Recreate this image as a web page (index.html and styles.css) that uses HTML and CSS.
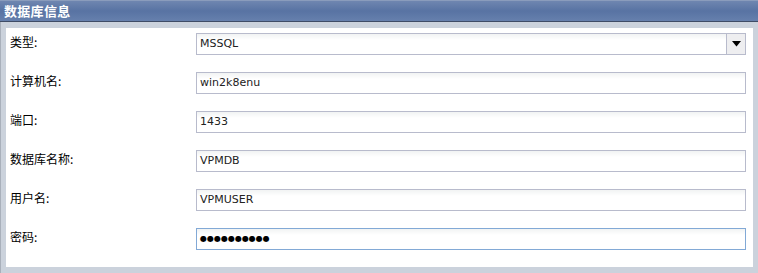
FILE: index.html
```html
<!DOCTYPE html>
<html lang="zh">
<head>
<meta charset="utf-8">
<link rel="stylesheet" href="styles.css">
</head>
<body>
<div class="panel">
  <div class="header">数据库信息</div>
  <div class="frame">
    <div class="content">
      <div class="row">
        <span class="label">类型:</span>
        <div class="select"><span class="val">MSSQL</span><span class="btn"><svg width="9" height="6" viewBox="0 0 9 6"><path d="M0 0H9L4.5 5.5Z" fill="#000"/></svg></span></div>
      </div>
      <div class="row">
        <span class="label">计算机名:</span>
        <div class="field">win2k8enu</div>
      </div>
      <div class="row">
        <span class="label">端口:</span>
        <div class="field">1433</div>
      </div>
      <div class="row">
        <span class="label">数据库名称:</span>
        <div class="field">VPMDB</div>
      </div>
      <div class="row">
        <span class="label">用户名:</span>
        <div class="field">VPMUSER</div>
      </div>
      <div class="row">
        <span class="label">密码:</span>
        <div class="field focus"><span class="dots">●●●●●●●●●●</span></div>
      </div>
    </div>
  </div>
</div>
</body>
</html>
```
FILE: styles.css
```css
html, body {
  margin: 0;
  padding: 0;
  background: #cdd4dd;
}
.panel {
  width: 758px;
  height: 273px;
  display: flex;
  flex-direction: column;
  font-family: "Noto Sans CJK SC", "DejaVu Sans", sans-serif;
}
.header {
  height: 22px;
  box-sizing: border-box;
  border-top: 1px solid #8a9cbc;
  border-bottom: 1px solid #3f4c66;
  background: linear-gradient(#6f86b0, #5873a3 50%, #6680ad);
  color: #fff;
  font-weight: bold;
  font-size: 13px;
  line-height: 20px;
  padding-left: 4px;
  letter-spacing: 0.3px;
}
.frame {
  flex: 1;
  background: #cbd2dc;
  border-left: 1px solid #a9b0bb;
  padding: 6px 5px 6px 5px;
  display: flex;
}
.content {
  flex: 1;
  background: #fff;
  padding: 5px 0 0 3px;
  display: flex;
  flex-direction: column;
  gap: 17px;
}
.row {
  display: flex;
  align-items: center;
  height: 22px;
}
.label {
  width: 186px;
  font-size: 12px;
  color: #000;
  line-height: 22px;
  padding-left: 1px;
  position: relative;
  top: -2px;
}
.field, .select {
  width: 550px;
  height: 22px;
  box-sizing: border-box;
  border: 1px solid #b8bbcc;
  background: linear-gradient(#f1f3f3, #fff 6px);
  font-family: "DejaVu Sans", Verdana, sans-serif;
  font-size: 11px;
  color: #222;
  line-height: 20px;
  padding-left: 3px;
}
.select {
  display: flex;
  justify-content: space-between;
  padding-right: 0;
}
.btn {
  width: 18px;
  height: 20px;
  border-left: 1px solid #b8bbcc;
  background: #eeeef0;
  display: flex;
  align-items: center;
  justify-content: center;
}
.focus {
  border-color: #82a9d6;
}
.dots {
  font-size: 8px;
  letter-spacing: 0px;
  color: #000;
  vertical-align: top;
}
```
